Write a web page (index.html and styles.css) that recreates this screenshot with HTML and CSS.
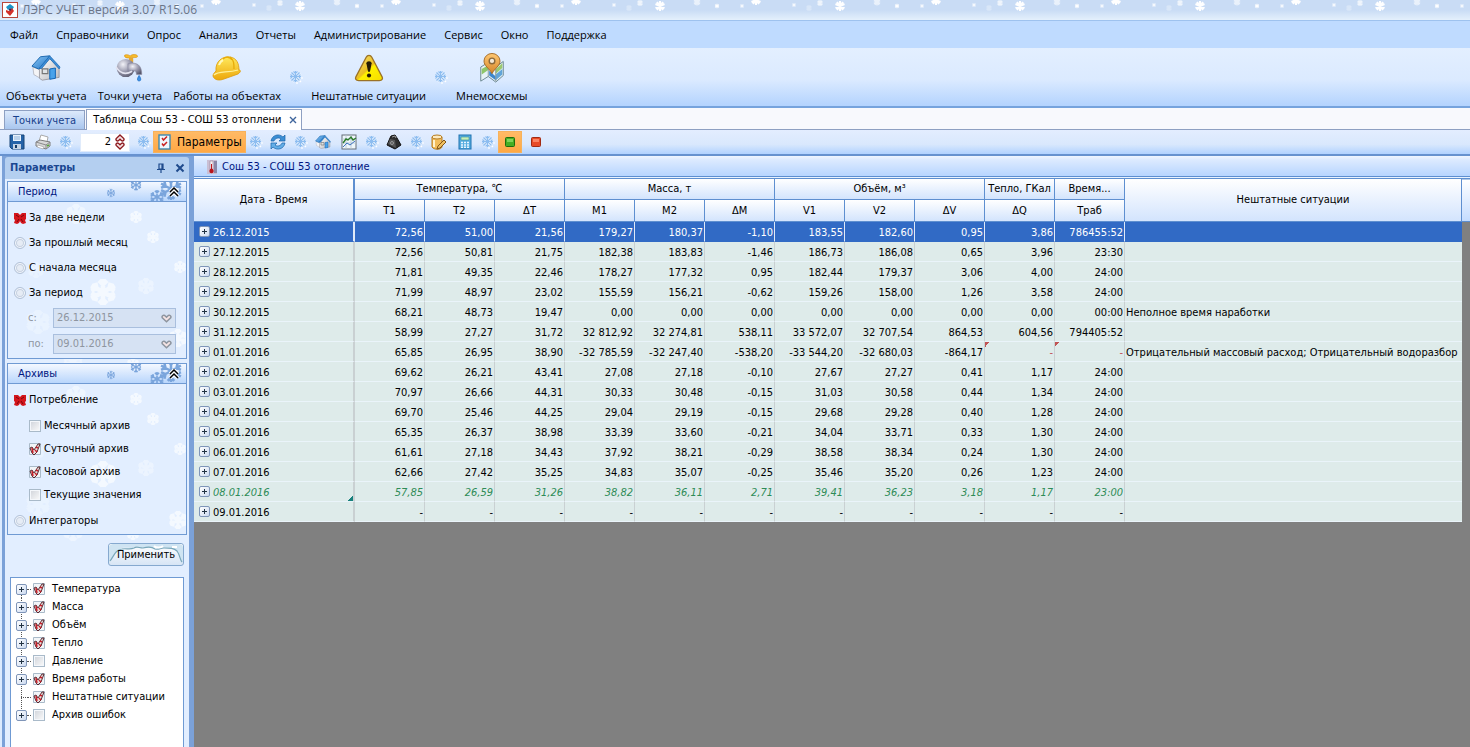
FILE: index.html
```html
<!DOCTYPE html>
<html lang="ru">
<head>
<meta charset="utf-8">
<title>ЛЭРС УЧЕТ</title>
<link rel="stylesheet" href="styles.css">
</head>
<body>
<svg class="defs" width="0" height="0" aria-hidden="true">
  <defs>
    <linearGradient id="roof" x1="0" y1="0" x2="1" y2="1"><stop offset="0" stop-color="#8cc8f4"/><stop offset="1" stop-color="#1f74c8"/></linearGradient>
    <linearGradient id="wall" x1="0" y1="0" x2="1" y2="1"><stop offset="0" stop-color="#ffffff"/><stop offset="1" stop-color="#b9b9bd"/></linearGradient>
    <linearGradient id="gold" x1="0" y1="0" x2="0" y2="1"><stop offset="0" stop-color="#ffe95c"/><stop offset="1" stop-color="#eda70a"/></linearGradient>
    <radialGradient id="steel" cx=".35" cy=".3" r=".8"><stop offset="0" stop-color="#f2f2f8"/><stop offset=".5" stop-color="#9a9aae"/><stop offset="1" stop-color="#55556a"/></radialGradient>
    <linearGradient id="pin" x1="0" y1="0" x2="0" y2="1"><stop offset="0" stop-color="#ffc873"/><stop offset="1" stop-color="#d5852a"/></linearGradient>
    <linearGradient id="sign" x1="0" y1="0" x2="1" y2="1"><stop offset="0" stop-color="#f7e27a"/><stop offset=".5" stop-color="#ecc020"/><stop offset=".55" stop-color="#fff200"/><stop offset="1" stop-color="#f5dc00"/></linearGradient>
    <symbol id="flake" viewBox="0 0 14 14"><g fill="none" stroke="#fff" stroke-width="1.2" transform="translate(1 1)"><path d="M7 1v12M1 7h12M3 3l8 8M11 3l-8 8"/></g><g fill="none" stroke="#8dbdf0" stroke-width="1.1"><path d="M6.500 1v11M1 6.500h11M2.500 2.500l8 8M10.500 2.500l-8 8M4.500 1.500l2 2 2-2M4.500 11.500l2-2 2 2M1.500 4.500l2 2-2 2M11.500 4.500l-2 2 2 2"/></g></symbol>
    <symbol id="house" viewBox="0 0 32 28"><path d="M2 13l8 3v9l-7-4z" fill="#f4f4f6" stroke="#9a9aa2" stroke-width=".6"/><path d="M9 15L20 4l10 10v10l-18 3-3-2z" fill="url(#wall)" stroke="#8d8d95" stroke-width=".8"/><path d="M1 12L10 2l10-1L10 14l-2 1z" fill="url(#roof)" stroke="#1764ad" stroke-width="1"/><path d="M20 1l11 12-1 2L20 4 11 15l-2-1z" fill="#3f8fd8" stroke="#1764ad" stroke-width=".7"/><path d="M12 15h6v5h-6z" fill="#dfe3e6" stroke="#777" stroke-width="1.300"/><path d="M20 15l6-1v11l-6 1z" fill="#49a2ea" stroke="#0e62b4"/></symbol>
    <symbol id="tap" viewBox="0 0 28 28"><path d="M9 2c2-1 5 0 5 1 1-2 7-2 7 0s-5 1-6 1c-1 1-7 1-6-2z" fill="#f8bd2c" stroke="#d48d0c" stroke-width=".6"/><path d="M13 4h4v5h-4z" fill="#e5a832"/><circle cx="10" cy="14" r="8.500" fill="url(#steel)"/><path d="M12 10c8-2 13 1 13 10h-5c0-4-3-4-8-3z" fill="url(#steel)" stroke="#8b8ba2" stroke-width=".5"/><path d="M1 13c3 5 8 8 15 4" stroke="#e4e4f0" fill="none" stroke-width="1.500"/><path d="M22.500 21c-2 3-2 5 0 5s2-2 0-5z" fill="#3e92e8" stroke="#1c6fc6" stroke-width=".8"/></symbol>
    <symbol id="helmet" viewBox="0 0 30 26"><path d="M4 16C3 6 11 1 18 2c7 1 9 7 9 13 2 0 2 2-1 4L12 24c-5 2-10 1-11-3 0-2 1-3 3-5z" fill="url(#gold)" stroke="#dc9a0a" stroke-width=".8"/><path d="M2 20c4-4 13-2 24-5" fill="none" stroke="#fff199" stroke-width="1.200"/><path d="M11 4c3-3 7-2 9 1M18 2c4 3 4 7 4 12" fill="none" stroke="#e8ac08" stroke-width="1.300"/><path d="M7 10c1-3 2-4 4-5" stroke="#fff8b8" stroke-width="2" fill="none"/></symbol>
    <symbol id="warning" viewBox="0 0 32 30"><path d="M16 1.500c1.500 0 2.500 1 3 2l11 21c1 2 0 4-3 4H5c-3 0-4-2-3-4l11-21c.5-1 1.500-2 3-2z" fill="url(#sign)" stroke="#9b7226" stroke-width="1.400"/><path d="M13.200 10c0-3 5.600-3 5.600 0L17 19h-2z" fill="#251c04"/><circle cx="16" cy="23" r="2.200" fill="#251c04"/></symbol>
    <symbol id="map" viewBox="0 0 28 32"><path d="M2 15l8-5 8 5 8-6v15l-8 7-8-6-8 5z" fill="#e6f2f6" stroke="#67848e"/><path d="M3 17l7-4v5l-7 5z" fill="#8fc66a"/><path d="M11 19l7 6v4l-7-5z" fill="#3d87cd"/><path d="M18 17l7-6v5l-7 6z" fill="#9bc96f"/><path d="M18 23l7-6v6l-7 6z" fill="#61a5d8"/><path d="M10 10v15M18 15v15" stroke="#83959b"/><path d="M14 22C11 16 5.500 14 5.500 8.500a8.500 8 0 0 1 17 0C22.500 14 17 16 14 22z" fill="url(#pin)" stroke="#a36a24"/><circle cx="14" cy="8.500" r="3" fill="#f4ead9" stroke="#8b6a3c" stroke-width="1.500"/></symbol>
    <symbol id="heart" viewBox="0 0 10 8"><path d="M5 7L1.200 3.400C.4 1.800 2 .6 3.400 1.300L5 2.800l1.600-1.500C8 .6 9.600 1.800 8.800 3.400z" fill="#f6e4e4" stroke="currentColor" stroke-width="1.400"/></symbol>
    <symbol id="doc" viewBox="0 0 14 16"><rect x="1" y="1" width="11" height="14" fill="#eef7fc" stroke="#3d88b0" stroke-width="1.400"/><path d="M4 4l1.500 2L9 2.500M4 9.500l1.500 2L9 8" fill="none" stroke="#c82222" stroke-width="1.500"/></symbol>
  </defs>
</svg>

<header class="titlebar">
  <svg class="logo" viewBox="0 0 16 16"><rect x=".5" y=".5" width="15" height="15" fill="#fff" stroke="#b8463c"/><path d="M8 2l4 3-2 3-2-2-2 2-2-3z" fill="#1993c8"/><path d="M4 8l3 1 3-3 2 3-4 5-4-4z" fill="#d3312b"/><circle cx="8" cy="7.500" r="1.200" fill="#2b2b60"/></svg>
  <h1>ЛЭРС УЧЕТ версия 3.07 R15.06</h1>
</header>

<nav class="menu">
  <button>Файл</button><button>Справочники</button><button>Опрос</button><button>Анализ</button><button>Отчеты</button><button>Администрирование</button><button>Сервис</button><button>Окно</button><button>Поддержка</button>
</nav>

<div class="launcher">
  <button><svg viewBox="0 0 32 28"><use href="#house"/></svg>Объекты учета</button>
  <button><svg viewBox="0 0 30 30"><use href="#tap"/></svg>Точки учета</button>
  <button><svg viewBox="0 0 30 26"><use href="#helmet"/></svg>Работы на объектах</button>
  <svg class="flake"><use href="#flake"/></svg>
  <button><svg viewBox="0 0 32 30"><use href="#warning"/></svg>Нештатные ситуации</button>
  <svg class="flake"><use href="#flake"/></svg>
  <button><svg viewBox="0 0 28 32"><use href="#map"/></svg>Мнемосхемы</button>
</div>

<div class="tabs">
  <button class="tab">Точки учета</button>
  <div class="tab active"><button>Таблица Сош 53 - СОШ 53 отоплени</button><button class="close" aria-label="Закрыть"><svg viewBox="0 0 8 8"><path d="M1 1l6 6M7 1L1 7" stroke="#3f659c" stroke-width="1.400"/></svg></button></div>
</div>

<div class="tools">
  <button aria-label="Сохранить"><svg viewBox="0 0 16 16"><path d="M1 1h14v14H3l-2-2z" fill="#2563a8" stroke="#174477"/><path d="M4 1h8v6H4z" fill="#e8f2fc"/><path d="M5 3h6M5 5h6" stroke="#8fb3da"/><path d="M4 10h8v5H4z" fill="#c3d2e4"/><path d="M6 11h2v3H6z" fill="#123a66"/></svg></button>
  <button aria-label="Печать"><svg viewBox="0 0 16 16"><path d="M4 7l2-6 7 2-1 5z" fill="#fff" stroke="#aaa"/><path d="M1 8l4-2 10 2v4l-4 3-10-3z" fill="#d8d8d8" stroke="#7c7c7c"/><path d="M1 8l10 3v4M11 11l4-3" stroke="#8a8a8a" fill="none"/><path d="M3 11l6 2-1 2-6-2z" fill="#fff" stroke="#999" stroke-width=".6"/><path d="M12 12l2-1" stroke="#5aa53c" stroke-width="1.500"/></svg></button>
  <svg class="flake"><use href="#flake"/></svg>
  <div class="spinner"><input type="text" value="2" aria-label="Количество"><span><button aria-label="Больше"><svg class="up" viewBox="0 0 10 8"><use href="#heart"/></svg></button><button aria-label="Меньше"><svg viewBox="0 0 10 8"><use href="#heart"/></svg></button></span></div>
  <svg class="flake"><use href="#flake"/></svg>
  <button class="params pressed"><svg viewBox="0 0 14 16"><use href="#doc"/></svg>Параметры</button>
  <svg class="flake"><use href="#flake"/></svg>
  <button aria-label="Обновить"><svg viewBox="0 0 16 16"><path d="M1 7C2 1 9-1 13 3l2-2v6H9l2-2C9 3 5 4 4 7z" fill="#3b8ed4" stroke="#1b64aa" stroke-width=".7"/><path d="M15 9c-1 6-8 8-12 4l-2 2V9h6l-2 2c2 2 6 1 7-2z" fill="#64aee6" stroke="#1b64aa" stroke-width=".7"/></svg></button>
  <svg class="flake"><use href="#flake"/></svg>
  <button aria-label="Объект"><svg viewBox="0 0 32 28"><use href="#house"/></svg></button>
  <button aria-label="График"><svg viewBox="0 0 16 16"><rect x="1" y="1" width="14" height="14" fill="#eef6fb" stroke="#666f78"/><path d="M1 5h14M1 9h14M5 1v14M10 1v14" stroke="#b5c6d0" stroke-width=".8"/><path d="M2 9l3-4 2 1 3-3 2 3 3-2" fill="none" stroke="#2b7b2b" stroke-width="1.400"/><path d="M2 13l4-4 3 2 5-4" fill="none" stroke="#3c72c0"/></svg></button>
  <svg class="flake"><use href="#flake"/></svg>
  <button aria-label="Вес"><svg viewBox="0 0 16 16"><path d="M5 2l4-1 2 3 4 7-6 4-8-4 3-7z" fill="#2e2e2e" stroke="#111"/><path d="M4 5l5 1 1 8-8-4z" fill="#555"/><path d="M6 3l3-1 1 2" stroke="#999" fill="none"/><circle cx="6" cy="9" r="1.500" fill="none" stroke="#999"/></svg></button>
  <svg class="flake"><use href="#flake"/></svg>
  <button aria-label="Правка"><svg viewBox="0 0 16 16"><path d="M1 3v10c2 3 9 3 10 0V3z" fill="#f2bd5c" stroke="#b57b1f"/><ellipse cx="6" cy="3" rx="5" ry="2" fill="#fdeabf" stroke="#b57b1f"/><path d="M3 6v7" stroke="#fff2cc" stroke-width="2"/><path d="M13 6l2 2-6 6-3 1 1-3z" fill="#f0c060" stroke="#80561a"/></svg></button>
  <button aria-label="Калькулятор"><svg viewBox="0 0 16 16"><rect x="2" y="1" width="12" height="14" fill="#59aee0" stroke="#1e72b0"/><path d="M4 3h8v3H4z" fill="#c9efb6" stroke="#3a8f9c" stroke-width=".6"/><path d="M4 8.500h8M4 11h8M4 13.300h8" stroke="#e9f6ff" stroke-width="1.500" stroke-dasharray="2 1"/></svg></button>
  <svg class="flake"><use href="#flake"/></svg>
  <button class="pressed" aria-label="Норма"><svg viewBox="0 0 16 16"><rect x="3.500" y="3.500" width="9" height="9" rx="1" fill="#47ae24" stroke="#1f6d0c"/><path d="M5 5h6v3H5z" fill="#7fd457"/></svg></button>
  <button aria-label="Ошибка"><svg viewBox="0 0 16 16"><rect x="3.500" y="3.500" width="9" height="9" rx="1" fill="#e84a26" stroke="#a12a12"/><path d="M5 5h6v3H5z" fill="#fb8463"/></svg></button>
</div>

<div class="workspace">
  <aside class="panel">
    <div class="panel-head"><h2>Параметры</h2>
      <button aria-label="Закрепить"><svg viewBox="0 0 10 10"><path d="M3 1h4v5H3zM6 1v5M1 6.500h8M5 7v3" fill="none" stroke="#1f4a8c" stroke-width="1.200"/></svg></button>
      <button aria-label="Закрыть"><svg viewBox="0 0 10 10"><path d="M1.500 1.500l7 7M8.500 1.500l-7 7" stroke="#1f4a8c" stroke-width="2"/></svg></button>
    </div>
    <div class="panel-body">
      <section class="group">
        <h3>Период<svg viewBox="0 0 10 10"><path d="M1 5l4-4 4 4M1 9l4-4 4 4" fill="none" stroke="#fff" stroke-width="3.500"/><path d="M1 5l4-4 4 4M1 9l4-4 4 4" fill="none" stroke="#000" stroke-width="1.500"/></svg></h3>
        <div class="period">
          <label><input type="radio" name="period" checked>За две недели</label>
          <label><input type="radio" name="period">За прошлый месяц</label>
          <label><input type="radio" name="period">С начала месяца</label>
          <label><input type="radio" name="period">За период</label>
          <div class="date"><label for="from">с:</label><span><input id="from" type="text" value="26.12.2015" disabled><button disabled aria-label="Выбрать дату"><svg viewBox="0 0 10 8"><use href="#heart"/></svg></button></span></div>
          <div class="date"><label for="to">по:</label><span><input id="to" type="text" value="09.01.2016" disabled><button disabled aria-label="Выбрать дату"><svg viewBox="0 0 10 8"><use href="#heart"/></svg></button></span></div>
        </div>
      </section>
      <section class="group">
        <h3>Архивы<svg viewBox="0 0 10 10"><path d="M1 5l4-4 4 4M1 9l4-4 4 4" fill="none" stroke="#fff" stroke-width="3.500"/><path d="M1 5l4-4 4 4M1 9l4-4 4 4" fill="none" stroke="#000" stroke-width="1.500"/></svg></h3>
        <div class="archives">
          <label><input type="radio" name="archive" checked>Потребление</label>
          <div class="checks">
            <label><input type="checkbox">Месячный архив</label>
            <label><input type="checkbox" checked>Суточный архив</label>
            <label><input type="checkbox" checked>Часовой архив</label>
            <label><input type="checkbox">Текущие значения</label>
          </div>
          <label><input type="radio" name="archive">Интеграторы</label>
        </div>
      </section>
      <button class="apply"><svg viewBox="0 0 76 23" preserveAspectRatio="none"><path d="M1 20V5c0-3 2-4 5-4h64c3 0 5 1 5 4v15c-3-3-2-8-6-12-4-3-8-3-12-3-5 0-4 2-8 1-3-3-8-1-12-1-5 0-6-2-10-1-3 2-8 0-13 1C7 8 5 13 1 20z" fill="#cfe4f2"/><path d="M2 18C6 13 7 7 14 6c4-1 8 1 12-1 3-2 5 0 9 0 4-1 8-2 12 1 4 1 5-1 9-1 6 0 10 0 13 3 3 4 3 9 5 11" fill="none" stroke="#79a7ba" stroke-width="1.200"/><path d="M46 3c2 2 7 2 9 0M64 4h5" stroke="#fff" stroke-width="2" fill="none"/></svg><span>Применить</span></button>
      <ul class="tree">
        <li><button class="plus" aria-label="Развернуть"></button><label><input type="checkbox" checked>Температура</label></li>
        <li><button class="plus" aria-label="Развернуть"></button><label><input type="checkbox" checked>Масса</label></li>
        <li><button class="plus" aria-label="Развернуть"></button><label><input type="checkbox" checked>Объём</label></li>
        <li><button class="plus" aria-label="Развернуть"></button><label><input type="checkbox" checked>Тепло</label></li>
        <li><button class="plus" aria-label="Развернуть"></button><label><input type="checkbox">Давление</label></li>
        <li><button class="plus" aria-label="Развернуть"></button><label><input type="checkbox" checked>Время работы</label></li>
        <li><i></i><label><input type="checkbox" checked>Нештатные ситуации</label></li>
        <li><button class="plus" aria-label="Развернуть"></button><label><input type="checkbox">Архив ошибок</label></li>
      </ul>
    </div>
  </aside>

  <main>
    <div class="doc-head"><svg viewBox="0 0 10 14"><path d="M0 0h10v14H0z" fill="#c9bfd4"/><path d="M7 1h3v12H7z" fill="#8a87a8"/><path d="M3 1h3v8H3z" fill="#f4f0f4" stroke="#9a7f94" stroke-width=".6"/><path d="M4 4h1v6H4z" fill="#c3161c"/><circle cx="4.500" cy="11" r="2.200" fill="#b8141c"/></svg><h2>Сош 53 - СОШ 53 отопление</h2></div>
    <div class="grid">
      <table>
        <colgroup><col class="c-date"><col span="11" class="c-num"><col></colgroup>
        <thead>
          <tr><th rowspan="2">Дата - Время</th><th colspan="3">Температура, ℃</th><th colspan="3">Масса, т</th><th colspan="3">Объём, м³</th><th>Тепло, ГКал</th><th>Время...</th><th rowspan="2">Нештатные ситуации</th></tr>
          <tr><th>T1</th><th>T2</th><th>ΔT</th><th>M1</th><th>M2</th><th>ΔM</th><th>V1</th><th>V2</th><th>ΔV</th><th>ΔQ</th><th>Траб</th></tr>
        </thead>
        <tbody>
          <tr class="selected"><td><button class="plus" aria-label="Развернуть"></button>26.12.2015</td><td>72,56</td><td>51,00</td><td>21,56</td><td>179,27</td><td>180,37</td><td>-1,10</td><td>183,55</td><td>182,60</td><td>0,95</td><td>3,86</td><td>786455:52</td><td></td></tr>
          <tr><td><button class="plus" aria-label="Развернуть"></button>27.12.2015</td><td>72,56</td><td>50,81</td><td>21,75</td><td>182,38</td><td>183,83</td><td>-1,46</td><td>186,73</td><td>186,08</td><td>0,65</td><td>3,96</td><td>23:30</td><td></td></tr>
          <tr><td><button class="plus" aria-label="Развернуть"></button>28.12.2015</td><td>71,81</td><td>49,35</td><td>22,46</td><td>178,27</td><td>177,32</td><td>0,95</td><td>182,44</td><td>179,37</td><td>3,06</td><td>4,00</td><td>24:00</td><td></td></tr>
          <tr><td><button class="plus" aria-label="Развернуть"></button>29.12.2015</td><td>71,99</td><td>48,97</td><td>23,02</td><td>155,59</td><td>156,21</td><td>-0,62</td><td>159,26</td><td>158,00</td><td>1,26</td><td>3,58</td><td>24:00</td><td></td></tr>
          <tr><td><button class="plus" aria-label="Развернуть"></button>30.12.2015</td><td>68,21</td><td>48,73</td><td>19,47</td><td>0,00</td><td>0,00</td><td>0,00</td><td>0,00</td><td>0,00</td><td>0,00</td><td>0,00</td><td>00:00</td><td>Неполное время наработки</td></tr>
          <tr><td><button class="plus" aria-label="Развернуть"></button>31.12.2015</td><td>58,99</td><td>27,27</td><td>31,72</td><td>32 812,92</td><td>32 274,81</td><td>538,11</td><td>33 572,07</td><td>32 707,54</td><td>864,53</td><td>604,56</td><td>794405:52</td><td></td></tr>
          <tr><td><button class="plus" aria-label="Развернуть"></button>01.01.2016</td><td>65,85</td><td>26,95</td><td>38,90</td><td>-32 785,59</td><td>-32 247,40</td><td>-538,20</td><td>-33 544,20</td><td>-32 680,03</td><td>-864,17</td><td class="error">-</td><td class="error">-</td><td>Отрицательный массовый расход; Отрицательный водоразбор</td></tr>
          <tr><td><button class="plus" aria-label="Развернуть"></button>02.01.2016</td><td>69,62</td><td>26,21</td><td>43,41</td><td>27,08</td><td>27,18</td><td>-0,10</td><td>27,67</td><td>27,27</td><td>0,41</td><td>1,17</td><td>24:00</td><td></td></tr>
          <tr><td><button class="plus" aria-label="Развернуть"></button>03.01.2016</td><td>70,97</td><td>26,66</td><td>44,31</td><td>30,33</td><td>30,48</td><td>-0,15</td><td>31,03</td><td>30,58</td><td>0,44</td><td>1,34</td><td>24:00</td><td></td></tr>
          <tr><td><button class="plus" aria-label="Развернуть"></button>04.01.2016</td><td>69,70</td><td>25,46</td><td>44,25</td><td>29,04</td><td>29,19</td><td>-0,15</td><td>29,68</td><td>29,28</td><td>0,40</td><td>1,28</td><td>24:00</td><td></td></tr>
          <tr><td><button class="plus" aria-label="Развернуть"></button>05.01.2016</td><td>65,35</td><td>26,37</td><td>38,98</td><td>33,39</td><td>33,60</td><td>-0,21</td><td>34,04</td><td>33,71</td><td>0,33</td><td>1,30</td><td>24:00</td><td></td></tr>
          <tr><td><button class="plus" aria-label="Развернуть"></button>06.01.2016</td><td>61,61</td><td>27,18</td><td>34,43</td><td>37,92</td><td>38,21</td><td>-0,29</td><td>38,58</td><td>38,34</td><td>0,24</td><td>1,30</td><td>24:00</td><td></td></tr>
          <tr><td><button class="plus" aria-label="Развернуть"></button>07.01.2016</td><td>62,66</td><td>27,42</td><td>35,25</td><td>34,83</td><td>35,07</td><td>-0,25</td><td>35,46</td><td>35,20</td><td>0,26</td><td>1,23</td><td>24:00</td><td></td></tr>
          <tr class="partial"><td><button class="plus" aria-label="Развернуть"></button>08.01.2016</td><td>57,85</td><td>26,59</td><td>31,26</td><td>38,82</td><td>36,11</td><td>2,71</td><td>39,41</td><td>36,23</td><td>3,18</td><td>1,17</td><td>23:00</td><td></td></tr>
          <tr><td><button class="plus" aria-label="Развернуть"></button>09.01.2016</td><td>-</td><td>-</td><td>-</td><td>-</td><td>-</td><td>-</td><td>-</td><td>-</td><td>-</td><td>-</td><td>-</td><td></td></tr>
        </tbody>
      </table>
    </div>
  </main>
</div>
</body>
</html>
```
FILE: styles.css
```css
:root {
  --line: #6f9ad3;
  --snow: url("data:image/svg+xml,%3Csvg xmlns='http://www.w3.org/2000/svg' width='180' height='170'%3E%3Cdefs%3E%3Cpath id='s' d='M0-10V10M-9-5L9 5M-9 5L9-5M-3-9L0-6 3-9M-3 9L0 6 3 9M-9-1L-5-3-6-7M9-1L5-3 6-7M-9 1L-5 3-6 7M9 1L5 3 6 7' stroke='%23f4f9ff' stroke-width='3.5' fill='none'/%3E%3C/defs%3E%3Cuse href='%23s' transform='translate(68 12)' opacity='.7'/%3E%3Cuse href='%23s' transform='translate(128 15) scale(.6)'/%3E%3Cuse href='%23s' transform='translate(145 35) scale(.6)'/%3E%3Cuse href='%23s' transform='translate(95 90) scale(1.3)'/%3E%3Cuse href='%23s' transform='translate(138 84) scale(.8)' opacity='.6'/%3E%3Cuse href='%23s' transform='translate(28 68) scale(.8)' opacity='.4'/%3E%3Cuse href='%23s' transform='translate(30 120) scale(1.200)' opacity='.4'/%3E%3Cuse href='%23s' transform='translate(172 65) scale(.6)'/%3E%3Cuse href='%23s' transform='translate(170 136) scale(.9)'/%3E%3C/svg%3E");
  --tick: url("data:image/svg+xml,%3Csvg xmlns='http://www.w3.org/2000/svg' viewBox='0 0 12 12'%3E%3Cpath d='M.5 .5h11v11H.5z' fill='%23f2f5f8' stroke='%23a9bac9'/%3E%3Cpath d='M1 5l2-1 2 3 4-6 2 0-3 8-3 3-2-2z' fill='%23e9dada' stroke='%23592c33'/%3E%3Cpath d='M3 5l1 5M6 7l2 2M7 4l2 1' stroke='%23c9202a' stroke-width='1.500'/%3E%3C/svg%3E");
  --bow: url("data:image/svg+xml,%3Csvg xmlns='http://www.w3.org/2000/svg' viewBox='0 0 12 12'%3E%3Cpath d='M0 1l4 0 2 2 2-2 4 0v6l-1 1 1 3-3 1-2-1-1-2-1 2-2 1-3-1 1-3-1-1z' fill='%23d4151c'/%3E%3Cpath d='M2 3l3 2M10 3L7 5M5 7l-2 3M7 7l2 3' stroke='%237d070c'/%3E%3C/svg%3E");
}
* { box-sizing: border-box; }
body {
  margin: 0;
  height: 100vh;
  overflow: hidden;
  display: flex;
  flex-direction: column;
  font: 11px/14px "DejaVu Sans Condensed", "DejaVu Sans", sans-serif;
  color: #000;
  background: #c4dcff;
}
button { font: inherit; color: inherit; background: none; border: 0; padding: 0; white-space: nowrap; }
input { font: inherit; color: inherit; margin: 0; }
h1, h2, h3 { margin: 0; font: inherit; }
svg { display: block; flex: none; }
.defs { position: absolute; }

.titlebar {
  flex: none;
  display: flex;
  align-items: center;
  gap: 4px;
  height: 21px;
  padding-left: 2px;
  color: #6b7588;
  border-bottom: 1px solid #9ec2ee;
  background: url("data:image/svg+xml,%3Csvg xmlns='http://www.w3.org/2000/svg' width='180' height='20'%3E%3Cdefs%3E%3Cpath id='s' d='M0-5V5M-4.500-2L4.500 2M-4.500 2L4.500-2M-3-4L3 4M3-4L-3 4' stroke='%23fff' stroke-width='2' fill='none'/%3E%3C/defs%3E%3Cuse href='%23s' x='120' y='6' transform='translate(-54 0)'/%3E%3Cuse href='%23s' x='162' y='0'/%3E%3Cuse href='%23s' transform='translate(123 6) scale(.45)'/%3E%3Cuse href='%23s' transform='translate(46 3) scale(.6)' opacity='.7'/%3E%3Cuse href='%23s' transform='translate(20 5) scale(.4)' opacity='.7'/%3E%3Cuse href='%23s' transform='translate(148 6) scale(.4)' opacity='.7'/%3E%3Cuse href='%23s' transform='translate(103 2) scale(.7)' opacity='.6'/%3E%3Cuse href='%23s' transform='translate(35 8) scale(.6)' opacity='.3'/%3E%3C/svg%3E") 54px 0 repeat-x, linear-gradient(#c9dcf5 50%, #e4f0fc);
}
.titlebar h1 { font: 12px/16px "Open Sans", "Noto Sans", sans-serif; }
.logo { width: 16px; height: 16px; }

.menu { flex: none; display: flex; gap: 18px; height: 27px; padding: 0 10px; font: 11px/16px "Open Sans", "Noto Sans", sans-serif; background: #bfdbff; }
.launcher {
  flex: none;
  display: flex;
  align-items: flex-start;
  gap: 11px;
  height: 60px;
  padding: 4px 6px 0;
  font: 11px/16px "Open Sans", "Noto Sans", sans-serif;
  border-bottom: 2px solid #76a3dd;
  background: linear-gradient(#e3efff, #dbeaff 55%, #b3d3fe);
}
.launcher button { display: flex; flex-direction: column; align-items: center; gap: 4px; }
.launcher button svg { width: 32px; height: 32px; padding: 1px; }
.flake { width: 14px; height: 14px; }
.launcher .flake { margin: 18px -3px 0; }

.tabs { flex: none; display: flex; align-items: flex-end; gap: 1px; height: 22px; padding-left: 4px; background: #f8f9fd; border-bottom: 1px solid #8ea0c2; }
.tab { height: 19px; padding: 2px 8px 0; color: #17408b; border: 1px solid #8ea0c2; border-bottom: 0; background: linear-gradient(#dce9fb, #a9c6ee); }
.tab.active { display: flex; align-items: center; gap: 8px; height: 21px; margin-bottom: -1px; padding: 0 4px 0 6px; color: #000; background: #fff; }
.close svg { width: 8px; height: 8px; }

.tools {
  flex: none;
  display: flex;
  align-items: center;
  height: 26px;
  padding: 0 4px;
  border-bottom: 2px solid #6792cf;
  background: linear-gradient(#e3edff, #d9e8fd 60%, #b1d2ff);
}
.tools > button { display: flex; align-items: center; justify-content: center; width: 26px; height: 22px; }
.tools > button svg { width: 16px; height: 16px; }
.tools > .flake { margin: 0 2px 0 3px; }
.tools > .pressed { width: 24px; margin: 0 1px; background: linear-gradient(#ffba66, #ffa844); border: 1px solid #f7b25c; }
.tools > .params { width: auto; gap: 4px; padding: 0 3px; margin: 0; font-size: 12px; }
.spinner { display: flex; width: 50px; height: 19px; margin: 0 4px 0 5px; background: #fff; border: 1px solid #e0ebfb; }
.spinner input { width: 34px; border: 0; padding: 0 4px; text-align: right; background: none; }
.spinner span { display: flex; flex-direction: column; color: #8d1a1f; }
.spinner button svg { width: 10px; height: 8px; }
.spinner .up { transform: rotate(180deg); }

.workspace { flex: 1; min-height: 0; display: flex; background: #7ba1d8; }
.panel { flex: none; width: 192px; display: flex; flex-direction: column; margin-right: 1px; padding: 1px 3px 0 3px; border-left: 2px solid #dcebff; }
.panel-head { flex: none; display: flex; align-items: center; gap: 9px; height: 22px; padding: 0 4px 0 5px; color: #1a4690; background: #b4cff0; border-radius: 3px 3px 0 0; }
.panel-head h2 { flex: 1; font-weight: bold; }
.panel-head svg { width: 10px; height: 10px; }
.panel-body { flex: 1; min-height: 0; display: flex; flex-direction: column; padding: 2px 2px 0; background: var(--snow) 0 170px #e2eeff; }
.group { flex: none; margin-bottom: 4px; border: 1px solid var(--line); background: var(--snow) 0 20px no-repeat #e2eeff; }
.group h3 {
  display: flex;
  align-items: center;
  justify-content: space-between;
  height: 20px;
  padding: 0 7px 0 10px;
  color: #00157f;
  border-bottom: 1px solid var(--line);
  background: url("data:image/svg+xml,%3Csvg xmlns='http://www.w3.org/2000/svg' width='84' height='20'%3E%3Cdefs%3E%3Cpath id='s' d='M0-10V10M-9-5L9 5M-9 5L9-5M-3-9L0-6 3-9M-3 9L0 6 3 9M-9-1L-5-3-6-7M9-1L5-3 6-7M-9 1L-5 3-6 7M9 1L5 3 6 7' stroke='%237aa5dc' stroke-width='2.300' fill='none'/%3E%3C/defs%3E%3Cuse href='%23s' transform='translate(9 11) scale(.42)'/%3E%3Cuse href='%23s' transform='translate(34 3) scale(.55)'/%3E%3Cuse href='%23s' transform='translate(55 15) scale(.7)'/%3E%3Cuse href='%23s' transform='translate(69 7) scale(1.100)'/%3E%3C/svg%3E") right 0 top 0 no-repeat, linear-gradient(#f4f8ff, #b9d6fc);
}
.group h3 svg { width: 10px; height: 10px; }
.group label { display: flex; align-items: center; gap: 3px; }
.period { padding: 3px 10px 1px 6px; }
.archives { padding: 3px 6px 1px; }
.period > label, .archives > label { height: 25px; }
.checks { padding: 2px 0 2px 15px; }
.checks label { height: 23px; }
input[type=radio], input[type=checkbox] { appearance: none; flex: none; width: 12px; height: 12px; }
input[type=radio] { border: 1px solid #b2c2d8; border-radius: 50%; background: #e6ecf5; box-shadow: inset 0 0 0 1px #f8fbff, inset 0 0 0 2px #c6d1e2; }
input[type=radio]:checked { border: 0; border-radius: 0; box-shadow: none; background: var(--bow); }
input[type=checkbox] { border: 1px solid #a9bac9; background: linear-gradient(135deg, #cfd3da, #fbfbfb); box-shadow: inset 0 0 0 1px #f4f7fb; }
input[type=checkbox]:checked { border: 0; box-shadow: none; background: var(--tick); }
.date { display: flex; align-items: center; height: 26px; padding-left: 14px; color: #8e959f; }
.date label { flex: none; width: 25px; }
.date span { flex: 1; min-width: 0; display: flex; align-items: center; height: 20px; padding: 0 3px; background: #d6e2f3; border: 1px solid #a9bfde; }
.date input { flex: 1; min-width: 0; padding: 0; border: 0; background: none; }
.date svg { width: 11px; height: 9px; }
.apply { position: relative; flex: none; align-self: flex-end; width: 76px; height: 23px; margin: 4px 3px 0; color: #000; background: linear-gradient(#fff, #d7e5f5); border: 1px solid #86a9cf; border-radius: 3px; }
.apply svg { position: absolute; inset: -1px; width: 76px; height: 23px; }
.apply span { position: relative; }

.tree { flex: 1; margin: 11px 3px 0; padding: 2px 5px; list-style: none; background: #fff; border: 1px solid var(--line); border-bottom: 0; overflow: hidden; }
.tree li { display: flex; align-items: center; height: 18px; background: repeating-linear-gradient(#555 0 1px, #fff 1px 2px) 5px 0 / 1px 100% no-repeat; }
.tree li:first-child { background-position: 5px 9px; }
.tree li:last-child { background-size: 1px 9px; }
.tree li::before { content: ""; order: 1; width: 4px; margin-right: 2px; border-top: 1px dotted #555; }
.tree i { width: 11px; height: 1px; background: repeating-linear-gradient(90deg, #555 0 1px, #fff 1px 2px) 5px 0 no-repeat; }
.tree label { order: 2; display: flex; align-items: center; gap: 7px; white-space: nowrap; }
.plus {
  flex: none;
  width: 11px;
  height: 11px;
  border: 1px solid #7f95b8;
  border-radius: 2px;
  background: linear-gradient(#234, #234) center / 5px 1px no-repeat, linear-gradient(#234, #234) center / 1px 5px no-repeat, linear-gradient(135deg, #fff, #ccdaf0);
}

main { flex: 1; min-width: 0; display: flex; flex-direction: column; padding-left: 1px; }
.doc-head { flex: none; display: flex; align-items: center; gap: 5px; height: 21px; padding: 2px 0 0 13px; color: #00157f; border-bottom: 1px solid #5e8fd0; background: linear-gradient(#f0f6ff, #dceaff 20%, #b7d5ff); }
.doc-head svg { width: 10px; height: 14px; }
.grid { flex: 1; padding-right: 8px; border-top: 1px solid #e8f2ff; background: linear-gradient(#5e8fd0 1px, #fff 2px, #c4dcff 43px, #5e8fd0 43px) 0 0 / 100% 44px no-repeat #808080; }
table { width: 100%; table-layout: fixed; border-collapse: separate; border-spacing: 0; border-top: 1px solid #5e8fd0; }
.c-date { width: 161px; }
.c-num { width: 70px; }
th { height: 22px; padding: 0; font-weight: normal; white-space: nowrap; border-right: 1px solid #5e8fd0; border-bottom: 1px solid #5e8fd0; background: linear-gradient(#fff, #d3e4fd); }
thead tr:first-child th { height: 21px; }
th:first-child[rowspan] { border-right-width: 2px; }
td { position: relative; height: 20px; padding: 2px 1px 0; text-align: right; white-space: nowrap; border-right: 1px solid #c9d0d2; border-bottom: 1px solid #eaf4fa; background: #deebea; }
td:first-child { display: flex; align-items: center; gap: 3px; padding-left: 5px; border-right-width: 2px; }
td:last-child { text-align: left; border-right: 0; }
td .plus { margin-bottom: 2px; }
.selected td { color: #fff; background: #316ac5; border-right-color: #dfe9f8; border-bottom-color: #316ac5; }
.selected { outline: 1px dotted #000; outline-offset: -1px; }
.partial td { font-style: italic; color: #2e8b57; }
.partial td:first-child::after { content: ""; position: absolute; right: 0; bottom: 0; width: 5px; height: 5px; background: linear-gradient(135deg, transparent 50%, #17807c 50%); }
.error { color: #c05454; }
.error::before { content: ""; position: absolute; left: 0; top: 0; width: 5px; height: 5px; background: linear-gradient(135deg, #c05454 50%, transparent 50%); }
```
